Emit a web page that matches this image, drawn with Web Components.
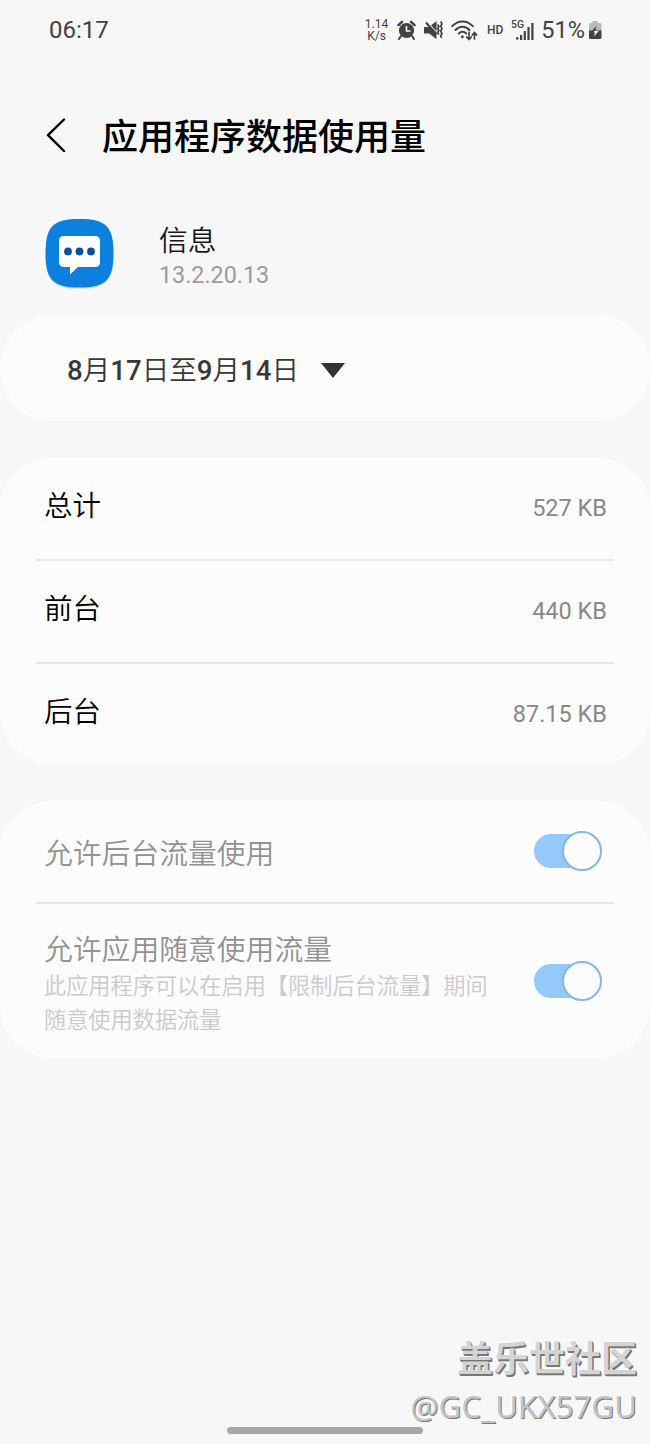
<!DOCTYPE html>
<html lang="zh-CN">
<head>
<meta charset="utf-8">
<title>应用程序数据使用量</title>
<style>
    body {
        margin: 0;
        background: #f7f7f7;
        font-family: Roboto, "Noto Sans CJK SC", sans-serif;
    }
</style>
</head>
<body>
<usage-screen>
    <status-bar slot="status" time="06:17" battery="51%"></status-bar>
    <page-header>应用程序数据使用量</page-header>
    <app-info version="13.2.20.13">信息</app-info>
    <card-group>
        <period-picker>8月17日至9月14日</period-picker>
    </card-group>
    <card-group>
        <usage-row value="527 KB">总计</usage-row>
        <usage-row value="440 KB">前台</usage-row>
        <usage-row value="87.15 KB">后台</usage-row>
    </card-group>
    <card-group>
        <switch-row>允许后台流量使用</switch-row>
        <switch-row class="tall">允许应用随意使用流量
            <span slot="note">此应用程序可以在启用【限制后台流量】期间<br>随意使用数据流量</span>
        </switch-row>
    </card-group>
    <water-mark slot="overlay" user="@GC_UKX57GU">盖乐世社区</water-mark>
</usage-screen>

<script>
function makeTemplate(html) {
    const template = document.createElement('template');
    template.innerHTML = html;
    return template;
}

class BaseComponent extends HTMLElement {
    constructor() {
        super();
        this.attachShadow({ mode: 'open' });
        this.shadowRoot.appendChild(this.constructor.template.content.cloneNode(true));
    }

    // copy an attribute into the element with the same class
    connectedCallback() {
        for (const name of this.constructor.fields || []) {
            this.shadowRoot.querySelector('.' + name).textContent = this.getAttribute(name);
        }
    }
}

class UsageScreen extends BaseComponent {}
UsageScreen.template = makeTemplate(`
    <style>
        :host {
            display: flex;
            flex-direction: column;
            position: relative;
            height: 1444px;
            overflow: hidden;
        }
        main {
            flex: 1;
            display: flex;
            flex-direction: column;
        }
        .home {
            align-self: center;
            width: 196px;
            height: 7px;
            margin-bottom: 10px;
            border-radius: 4px;
            background: #a6a6a6;
        }
    </style>
    <slot name="status"></slot>
    <main><slot></slot></main>
    <div class="home"></div>
    <slot name="overlay"></slot>
`);

class StatusBar extends BaseComponent {}
StatusBar.fields = ['time', 'battery'];
StatusBar.template = makeTemplate(`
    <style>
        :host {
            display: flex;
            align-items: center;
            justify-content: space-between;
            box-sizing: border-box;
            height: 60px;
            padding: 0 48px 0 49px;
            color: #424242;
        }
        .time { font-size: 24px; }
        .icons {
            display: flex;
            align-items: center;
        }
        .speed {
            display: grid;
            grid-template-rows: 11px 12px;
            width: 25px;
            margin-right: 8px;
            padding-top: 1px;
            font-size: 12px;
            line-height: 11px;
            text-align: center;
        }
        .unit { line-height: 13px; }
        .hd {
            margin-left: 9px;
            font-size: 12px;
            font-weight: 500;
        }
        .battery {
            margin: 0 3px 0 6px;
            font-size: 23.5px;
        }
        svg { display: block; }
        .mute { margin-left: 8px; }
        .wifi { margin-left: 8px; }
        .signal { margin-left: 8px; }
    </style>
    <span class="time"></span>
    <div class="icons">
        <div class="speed"><span>1.14</span><span class="unit">K/s</span></div>
        <svg width="19" height="20" viewBox="0 0 19 20" fill="none" stroke="#424242">
            <circle cx="9.5" cy="10.5" r="7.6" fill="#424242" stroke="none"/>
            <path d="M1.4 5.2 5 1.8M17.6 5.2 14 1.8" stroke-width="2.4" stroke-linecap="round"/>
            <path d="M4 16 2 19M15 16l2 3" stroke-width="2" stroke-linecap="round"/>
            <path d="M9.5 6v5h4" stroke="#f7f7f7" stroke-width="1.6"/>
        </svg>
        <svg class="mute" width="19" height="20" viewBox="0 0 19 20" fill="none" stroke="#424242">
            <path d="M0 7h5l7.500-6v18L5 13.500H0z" fill="#424242" stroke="none"/>
            <path d="M3.500 2.300 13 12.500" stroke="#f7f7f7" stroke-width="1.100"/>
            <path d="M2 2.500 12.500 14.500" stroke-width="2"/>
            <path d="M13.600 4.500l1.300 2-1.300 2 1.300 2-1.300 2 1.300 2M16.700 1.500l1.300 2.400-1.300 2.400 1.300 2.400-1.300 2.400 1.300 2.400-1.300 2.400.9 2" stroke-width="1.700"/>
        </svg>
        <svg class="wifi" width="27" height="21" viewBox="0 0 27 21" fill="none" stroke="#424242" stroke-linecap="round">
            <path d="M1.200 6.200C7-.2 16-.2 21.800 6.200M4.500 10c4-4.300 10-4.300 14 0M7.800 13.500c2.200-2.300 5.200-2.300 7.400 0" stroke-width="2"/>
            <circle cx="11.300" cy="16.800" r="1.500" fill="#424242" stroke="none"/>
            <path d="M18 12v7M15.600 17l2.400 2.600 2.400-2.600M23.500 19v-6M21.300 15l2.200-2.400 2.200 2.400" stroke-width="1.700"/>
        </svg>
        <span class="hd">HD</span>
        <svg class="signal" width="24" height="22" viewBox="0 0 24 22" fill="#424242">
            <text x="0" y="9" font-size="11" font-weight="500" textLength="13" lengthAdjust="spacingAndGlyphs">5G</text>
            <circle cx="6.300" cy="19.400" r="1.300"/>
            <path d="M9 16h2.200v5H9zM12.700 12h2.200v9h-2.200zM16.400 8h2.200v13h-2.200zM20.300 4h2.200v17h-2.200z"/>
        </svg>
        <span class="battery"></span>
        <svg width="14" height="20" viewBox="0 0 14 20">
            <path d="M4.500 1h5v2H12a1.500 1.500 0 0 1 1.500 1.500V11H1V4.500A1.500 1.500 0 0 1 2.500 3h2z" fill="#b9b9b9"/>
            <path d="M1 10.500h12.500v7A1.500 1.500 0 0 1 12 19H2.500A1.500 1.500 0 0 1 1 17.500z" fill="#424242"/>
            <path d="M8.500 6 4 11h3.500v-.5z" fill="#424242"/>
            <path d="M6.500 11h4.200L6 16.500 7 12.500H5.500z" fill="#f7f7f7"/>
        </svg>
    </div>
`);

class PageHeader extends BaseComponent {}
PageHeader.template = makeTemplate(`
    <style>
        :host {
            display: flex;
            align-items: center;
            gap: 36px;
            height: 52px;
            padding: 50px 0 0 46px;
            color: #000;
        }
        h1 {
            margin: 0;
            padding-top: 4px;
            font-size: 36px;
            font-weight: 500;
            line-height: 52px;
        }
    </style>
    <svg width="20" height="36" viewBox="0 0 20 36" fill="none" stroke="#000" stroke-width="2.400" stroke-linecap="round" stroke-linejoin="round">
        <path d="M18 1.500 2 17.200 18 33"/>
    </svg>
    <h1><slot></slot></h1>
`);

class AppInfo extends BaseComponent {}
AppInfo.fields = ['version'];
AppInfo.template = makeTemplate(`
    <style>
        :host {
            display: flex;
            align-items: center;
            gap: 44px;
            height: 72px;
            padding: 56px 0 0 44px;
        }
        .text { padding-top: 8px; }
        .name {
            font-family: "Noto Sans CJK SC DemiLight", "Noto Sans CJK SC", sans-serif;
            font-size: 28.7px;
            font-weight: 350;
            line-height: 34px;
            color: #161616;
        }
        .version {
            font-size: 23.3px;
            line-height: 38px;
            color: #9b9b9b;
        }
    </style>
    <svg width="71" height="72" viewBox="0 0 71 72">
        <path d="M35.500 3C62 3 69.500 10.500 69.500 37S62 71 35.500 71 1.500 63.500 1.500 37 9 3 35.500 3z" fill="#d7e4f0"/>
        <path d="M35.500 1C62 1 69.500 8.500 69.500 35.200S62 69.500 35.500 69.500 1.500 62 1.500 35.200 9 1 35.500 1z" fill="#0c80df"/>
        <path d="M20 18h31q5 0 5 5v21q0 5-5 5H34l-8 7.500V49h-6q-5 0-5-5V23q0-5 5-5z" fill="#fff"/>
        <g fill="#0b4f9c">
            <circle cx="24" cy="33.500" r="3.900"/>
            <circle cx="35.500" cy="33.500" r="3.900"/>
            <circle cx="47" cy="33.500" r="3.900"/>
        </g>
    </svg>
    <div class="text">
        <div class="name"><slot></slot></div>
        <div class="version"></div>
    </div>
`);

class CardGroup extends BaseComponent {}
CardGroup.template = makeTemplate(`
    <style>
        :host {
            display: block;
            margin-bottom: 37px;
            border-radius: 52px;
            background: #fcfcfc;
        }
        :host(:first-of-type) { margin-top: 26px; }
        /* hairline between rows, not above the first one */
        ::slotted(:not(:first-child)) { border-top: 2px solid #e8e8e8; }
    </style>
    <slot></slot>
`);

class PeriodPicker extends BaseComponent {}
PeriodPicker.template = makeTemplate(`
    <style>
        :host {
            display: flex;
            align-items: center;
            gap: 22px;
            height: 105px;
            padding-left: 67px;
            font-size: 27.600px;
            font-weight: 500;
            color: #383838;
        }
        .text {
            padding-bottom: 2px;
            font-family: Roboto, "Noto Sans CJK SC DemiLight", "Noto Sans CJK SC Light", "Noto Sans CJK SC", sans-serif;
        }
        svg { padding-top: 3px; }
    </style>
    <span class="text"><slot></slot></span>
    <svg width="24" height="15" viewBox="0 0 24 15"><path d="M0 0h24L12 15z" fill="#333"/></svg>
`);

class UsageRow extends BaseComponent {}
UsageRow.fields = ['value'];
UsageRow.template = makeTemplate(`
    <style>
        :host {
            display: flex;
            justify-content: space-between;
            align-items: center;
            height: 101px;
            margin: 0 36px;
            padding: 0 7px 0 8px;
        }
        :host(:last-child) { height: 100px; }
        .label {
            padding-bottom: 10px;
            font-family: "Noto Sans CJK SC DemiLight", "Noto Sans CJK SC", sans-serif;
            font-size: 28.500px;
            font-weight: 350;
            color: #000;
        }
        .value {
            padding-bottom: 1px;
            font-size: 23.500px;
            color: #888;
        }
    </style>
    <span class="label"><slot></slot></span>
    <span class="value"></span>
`);

class SwitchRow extends BaseComponent {}
SwitchRow.template = makeTemplate(`
    <style>
        :host {
            display: flex;
            justify-content: space-between;
            align-items: center;
            height: 101px;
            margin: 0 36px;
            padding: 0 12px 0 8px;
            font-family: "Noto Sans CJK SC DemiLight", "Noto Sans CJK SC", sans-serif;
            font-weight: 350;
        }
        :host(.tall) { height: 154px; }
        .label {
            font-size: 28.800px;
            line-height: 40px;
            color: #929292;
        }
        :host(.tall) .label { padding-top: 1px; }
        .note {
            margin-top: -1px;
            font-size: 22.200px;
            line-height: 34px;
            color: #cacaca;
            white-space: nowrap;
        }
        .track {
            display: flex;
            align-items: center;
            justify-content: flex-end;
            width: 60px;
            height: 34px;
            margin: 0 8px 1px 0;
            border-radius: 17px;
            background: #96c9fb;
        }
        .knob {
            flex: none;
            box-sizing: border-box;
            width: 40px;
            height: 40px;
            margin-right: -8px;
            border: 2px solid #82b6e6;
            border-radius: 50%;
            background: #fcfcfc;
        }
    </style>
    <div>
        <div class="label"><slot></slot></div>
        <div class="note"><slot name="note"></slot></div>
    </div>
    <div class="track"><div class="knob"></div></div>
`);

class WaterMark extends BaseComponent {}
WaterMark.fields = ['user'];
WaterMark.template = makeTemplate(`
    <style>
        :host {
            display: block;
            position: absolute;
            right: 13px;
            bottom: 15px;
            text-align: right;
            color: #d4d4d4;
            text-shadow: 1px 1px 0 #777, 1.500px 1.500px 0 #777, -1px -1px 0 #fff;
            white-space: nowrap;
        }
        .site {
            font-size: 36px;
            font-weight: 700;
            line-height: 48px;
        }
        .user {
            font-family: "Noto Sans", sans-serif;
            font-size: 31.300px;
            font-weight: 400;
            line-height: 45px;
            text-shadow: 1px 1px 0 #777, -1px -1px 0 #fff;
            color: #c4c4c4;
        }
    </style>
    <div class="site"><slot></slot></div>
    <div class="user"></div>
`);

customElements.define('usage-screen', UsageScreen);
customElements.define('status-bar', StatusBar);
customElements.define('page-header', PageHeader);
customElements.define('app-info', AppInfo);
customElements.define('card-group', CardGroup);
customElements.define('period-picker', PeriodPicker);
customElements.define('usage-row', UsageRow);
customElements.define('switch-row', SwitchRow);
customElements.define('water-mark', WaterMark);
</script>
</body>
</html>
